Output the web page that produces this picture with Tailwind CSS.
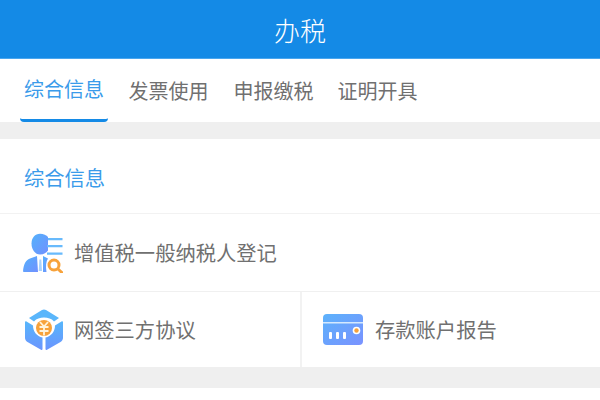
<!DOCTYPE html>
<html lang="zh-CN">
<head>
  <meta charset="UTF-8">
  <title>办税</title>
  <script src="https://cdn.jsdelivr.net/npm/@tailwindcss/browser@4"></script>
</head>
<body class="w-[600px] h-[400px] overflow-hidden bg-white font-['Noto_Sans_CJK_SC','Noto_Sans',sans-serif]">
  <header class="h-[59px] bg-[#148ae6] border-b border-[#4aa6ee] flex items-center justify-center text-white text-[26px] font-light">办税</header>

  <nav class="h-[63px] flex text-[20px] text-[#707070] bg-white">
    <div class="ml-[20px] w-[88px] h-full flex items-center justify-center text-[#3a9bea] border-b-[3px] border-[#148ae6] rounded-b-sm">综合信息</div>
    <div class="ml-[20px] w-[81px] flex items-center justify-center">发票使用</div>
    <div class="ml-[24px] w-[81px] flex items-center justify-center">申报缴税</div>
    <div class="ml-[23px] w-[81px] flex items-center justify-center">证明开具</div>
  </nav>

  <div class="h-[17px] bg-[#efefef]"></div>

  <section class="h-[75px] pl-[24px] pt-[2px] flex items-center text-[20.300px] text-[#3a9bea] border-b border-[#f2f2f2]">综合信息</section>

  <div class="h-[78px] pl-[23px] flex items-center gap-[11px] text-[20.300px] text-[#707070] border-b border-[#f0f0f0]">
    <svg class="w-[40px] h-[40px] shrink-0" viewBox="0 0 40 40">
      <defs>
        <linearGradient id="a" x1="0" y1="0" x2="1" y2="1"><stop offset="0" stop-color="#53b2fb"/><stop offset="1" stop-color="#7190ff"/></linearGradient>
      </defs>
      <path d="M17 .7c-5 0-8.500 4-8.500 9.800 0 6 3.500 11 8.500 11 4 0 6.500-2 8-4V4C23.500 2 20.500 .7 17 .7z" fill="url(#a)"/>
      <path d="M25 5h14.500v2.200H25zM24 12h15.500v2.200H24zM24 19.500h15.500v2.200H24z" fill="#68bafc"/>
      <path d="M0 38.500c.6-7 2.500-11.500 7-13l7-2.500 1 16H1.500c-1 0-1.500-.3-1.500-.5z" fill="url(#a)"/>
      <path d="M20 23l5 2.500c-2 3-2.500 7.500-1.500 13.500H20z" fill="url(#a)"/>
      <path d="M15 23l2.300 2.500L19.500 23M16.500 26.500L15.700 38M18.300 26.500L19 38" fill="none" stroke="#fff" stroke-width="1"/>
      <path d="M16.400 26.500h1.900L19 38h-3.300z" fill="#a9d2fd"/>
      <circle cx="31" cy="32" r="5" fill="#fff" stroke="#f7a23b" stroke-width="3"/>
      <path d="M35 36l3.800 3.500" stroke="#f7a23b" stroke-width="3" stroke-linecap="round"/>
    </svg>
    <span>增值税一般纳税人登记</span>
  </div>

  <div class="h-[75px] flex text-[20.300px] text-[#707070]">
    <div class="w-[302px] pl-[25px] flex items-center gap-[11px] border-r-2 border-[#f2f2f2]">
      <svg class="w-[38px] h-[42px] shrink-0" viewBox="0 0 38 42">
        <defs>
          <linearGradient id="b" x1="0" y1="0" x2="0" y2="1"><stop offset="0" stop-color="#56b6fb"/><stop offset="1" stop-color="#6b94fe"/></linearGradient>
        </defs>
        <path d="M17 1c1.300-.8 2.700-.8 4 0l13 8-5 3.500C26.500 9.500 23 8.500 19 8.500s-7.500 1-10 4L4 9z" fill="#5ab6fb"/>
        <path d="M0 13.500c0-1 .7-1.500 1.500-1L8 16.500c0 6 4 11 9.500 12V40c0 1-.7 1.300-1.500.8L2.500 33C1 32 0 30.500 0 29z" fill="url(#b)"/>
        <path d="M38 13.500c0-1-.7-1.500-1.500-1L30 16.500c0 6-4 11-9.500 12V40c0 1 .7 1.300 1.500.8L35.500 33c1.500-1 2.500-2.500 2.500-4z" fill="url(#b)"/>
        <circle cx="19" cy="19" r="8" fill="#f7a23b"/>
        <path d="M15 13l4 4.500 4-4.500M14.500 18h9M14.500 22h9M19 17.500V26.500" fill="none" stroke="#fff3dc" stroke-width="1.800"/>
      </svg>
      <span>网签三方协议</span>
    </div>
    <div class="flex-1 pl-[21px] flex items-center gap-[12px]">
      <svg class="w-[40px] h-[31px] shrink-0" viewBox="0 0 40 31">
        <defs>
          <linearGradient id="c" x1="0" y1="0" x2="1" y2="1"><stop offset="0" stop-color="#5cb2fb"/><stop offset="1" stop-color="#7a92ff"/></linearGradient>
        </defs>
        <rect width="40" height="31" rx="4" fill="url(#c)"/>
        <path d="M0 8h40v1.500H0z" fill="#d5e9fe"/>
        <rect x="6" y="18" width="3" height="7" rx="1" fill="#fff"/>
        <rect x="13" y="18" width="3" height="7" rx="1" fill="#fff"/>
        <rect x="20" y="18" width="3" height="7" rx="1" fill="#fff"/>
        <circle cx="33.500" cy="16.500" r="3.800" fill="#fff"/>
        <circle cx="33.500" cy="16.500" r="2.200" fill="#f7a23b"/>
      </svg>
      <span>存款账户报告</span>
    </div>
  </div>

  <div class="h-[21px] bg-[#efefef]"></div>
  <div class="h-[12px] bg-white"></div>
</body>
</html>
